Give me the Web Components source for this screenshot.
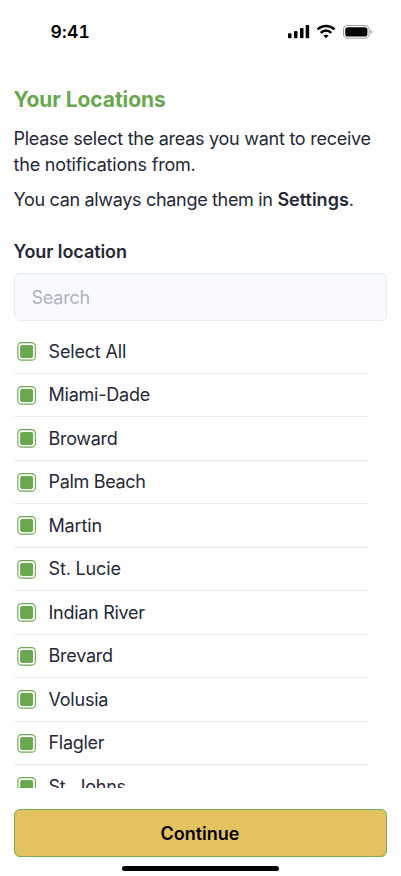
<!DOCTYPE html>
<html lang="en"><head><meta charset="utf-8"><title>Your Locations</title>
<style>
html,body{margin:0;height:100%;background:#fff}
body{overflow:hidden;font-family:Inter,"Liberation Sans",sans-serif;font-size:18px;color:#252836;--green:#6aa84f;--line:#e9eef5}
</style></head><body>
<script>
const define=(name,html,setup)=>customElements.define(name,class extends HTMLElement{
  connectedCallback(){
    if(this.shadowRoot)return;
    const root=this.attachShadow({mode:'open'});
    const t=document.createElement('template');t.innerHTML=html;
    root.append(t.content.cloneNode(true));
    if(setup)setup(root,this);
  }
});
define('status-bar',`<style>
:host{display:flex;justify-content:space-between;align-items:flex-start;height:85px;padding:21px 27px 0 50.5px;box-sizing:border-box;color:#000}
time{font-weight:600;font-size:17.5px;line-height:22px;font-feature-settings:"tnum";letter-spacing:.2px}
svg{display:block;margin-top:3px}
</style><time>9:41</time>
<svg width="86" height="16" viewBox="0 0 86 16">
<rect x="0" y="9.3" width="3.5" height="5" rx="1"/><rect x="6" y="7" width="3.5" height="7.3" rx="1"/><rect x="12" y="4" width="3.5" height="10.3" rx="1"/><rect x="17.7" y="1" width="3.5" height="13.3" rx="1"/>
<g fill="none" stroke="#000" stroke-width="2.5"><path d="M29.5 5.4C34.5 .9 41.5 .9 46.5 5.4"/><path d="M32.7 8.9C36 6 40 6 43.3 8.9"/></g>
<path d="M35.4 11.6C37 10.4 39 10.4 40.6 11.6L38 14.3Z"/>
<rect x="55.5" y="1.5" width="25.6" height="12.7" rx="4.1" fill="none" stroke="#000" stroke-opacity=".38"/>
<rect x="57.2" y="3.2" width="22.2" height="9.4" rx="2.6"/>
<path d="M82.5 5.7V10.1Q84.1 9.5 84.1 7.9Q84.1 6.3 82.5 5.7Z" fill-opacity=".42"/></svg>`);
define('page-intro',`<style>
:host{display:block;color:#252836}
h1{margin:0 0 11px;font-size:21px;line-height:30px;font-weight:700;letter-spacing:-.07px;color:var(--green)}
::slotted(p){margin:0 0 9px!important;line-height:26px;white-space:nowrap}
</style><h1><slot name="title"></slot></h1><slot></slot>`);
define('search-field',`<style>
:host{display:block}
label{display:block;margin:26px 0 8px;font-weight:600;line-height:26px;letter-spacing:-.08px}
input{display:block;box-sizing:border-box;width:373px;height:48px;margin:0;padding:0 17px;border:1px solid #e8ecf4;border-radius:6px;background:#f9faff;font:inherit;color:inherit;letter-spacing:-.22px;outline:0}
input::placeholder{color:#adb3c3;opacity:1}
</style><label for="q"><slot></slot></label><input id="q" placeholder="Search">`);
define('check-row',`<style>
:host{display:flex;align-items:center;box-sizing:border-box;height:43.5px;padding-left:3.5px;background:linear-gradient(var(--line),var(--line)) 0 100%/100% 1px no-repeat}
svg{width:19px;height:19px;flex:none;margin-right:12.5px}
span{line-height:26px;white-space:nowrap}
</style><svg viewBox="0 0 19 19"><rect x=".85" y=".65" width="17.5" height="17.5" rx="3.7" fill="#fff" stroke="#6aa84f" stroke-width="1.1"/><rect x="3.1" y="2.9" width="13" height="13" rx="2" fill="#6aa84f"/></svg><span><slot></slot></span>`);
define('check-list',`<style>
:host{display:block;width:355.5px;height:458px;margin-top:9px;overflow:hidden}
</style><slot></slot>`);
define('primary-button',`<style>
:host{display:block;margin-top:21px}
button{display:block;box-sizing:border-box;width:373px;height:48px;border:1px solid #74ad52;border-radius:6px;background:#e4c260;color:#000;font:inherit;font-weight:600;padding:0}
</style><button><slot></slot></button>`);
define('home-indicator',`<style>
:host{display:block;width:157px;height:5px;border-radius:3px;background:#000;margin:9px 0 0 108.5px}
</style>`);
define('locations-screen',`<style>
:host{display:block;height:876px;overflow:hidden}
main{padding-left:13.5px}
</style><status-bar></status-bar><main>
<page-intro><span slot="title">Your Locations</span><p><span style="letter-spacing:-.26px">Please select the areas you want to receive</span><br><span style="letter-spacing:-.19px">the notifications from.</span></p><p><span style="letter-spacing:-.32px">You can always change them in </span><b style="font-weight:600">Settings</b>.</p></page-intro>
<search-field>Your location</search-field><check-list></check-list><primary-button>Continue</primary-button><home-indicator></home-indicator></main>`,root=>{
  const list=root.querySelector('check-list');
  for(const [name,tracking] of [['Select All',-.17],['Miami-Dade',-.23],['Broward',-.3],['Palm Beach',-.32],['Martin',-.14],['St. Lucie',-.15],['Indian River',-.28],['Brevard',-.25],['Volusia',-.22],['Flagler',-.3],['St. Johns',-.24]]){
    const row=document.createElement('check-row');row.textContent=name;row.style.letterSpacing=tracking+'px';list.append(row);
  }
});
</script>
<locations-screen></locations-screen>
</body></html>
